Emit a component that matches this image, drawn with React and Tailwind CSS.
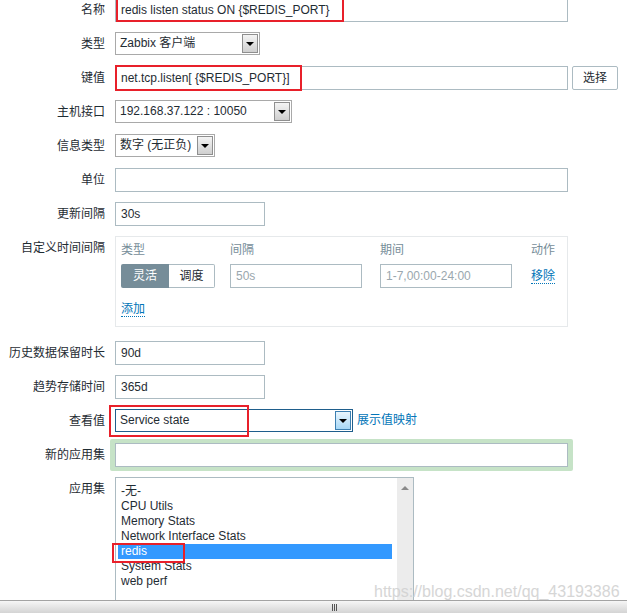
import React from "react";

const Arrow = () => (
  <span className="h-0 w-0 border-x-[4px] border-t-[4px] border-x-transparent border-t-black" />
);

const Select = ({ className, value, focused }) => {
  return (
    <div
      className={`flex h-[23px] items-stretch bg-white ${
        focused ? "border border-[#1f5e8c]" : "border border-[#a9a9a9]"
      } ${className}`}
    >
      <div className="flex-1 truncate pl-[4px] leading-[21px]">{value}</div>
      <div
        className={`m-px flex w-[16px] items-center justify-center border ${
          focused
            ? "border-[#3c7fb1] bg-linear-to-b from-[#eaf6fd] to-[#a7d8f7]"
            : "border-[#8f8f8f] bg-linear-to-b from-[#f4f4f4] to-[#cfcfcf]"
        }`}
      >
        <Arrow />
      </div>
    </div>
  );
};

const Input = ({ className, value, placeholder }) => (
  <div
    className={`h-6 border border-[#acbbc2] bg-white px-[5px] leading-[22px] ${className}`}
  >
    {value ? value : <span className="text-[#9aa7ae]">{placeholder}</span>}
  </div>
);

const Row = ({ label, className, children }) => (
  <div className={`flex items-start ${className}`}>
    <div className="h-6 w-[105px] shrink-0 text-right leading-6">{label}</div>
    <div className="relative ml-[10px] flex items-start">{children}</div>
  </div>
);

const RedBox = ({ className }) => (
  <div className={`pointer-events-none absolute border-2 border-[#e8202a] ${className}`} />
);

const apps = [
  "-无-",
  "CPU Utils",
  "Memory Stats",
  "Network Interface Stats",
  "redis",
  "System Stats",
  "web perf",
];

export default function App() {
  return (
    <div className="flex h-[613px] w-[627px] flex-col overflow-hidden bg-white text-[12px] text-[#1f2c33] [font-family:'Liberation_Sans','Noto_Sans_CJK_SC',sans-serif]">
      <div className="relative flex-1 overflow-hidden">
        <div className="-mt-[2px] flex flex-col">
          <Row label="名称" className="h-[34px]">
            <Input className="w-[453px]" value="redis listen status ON {$REDIS_PORT}" />
            <RedBox className="-top-[1px] left-px h-[25px] w-[228px]" />
          </Row>

          <Row label="类型" className="h-[34px]">
            <Select className="w-[145px]" value="Zabbix 客户端" />
          </Row>

          <Row label="键值" className="h-[34px]">
            <Input className="w-[453px]" value="net.tcp.listen[ {$REDIS_PORT}]" />
            <RedBox className="-top-[1px] left-0 h-[26px] w-[187px]" />
            <button className="ml-[4px] h-6 w-[46px] rounded-[2px] border border-[#acbbc2] bg-white text-[12px] text-[#1f2c33]">
              选择
            </button>
          </Row>

          <Row label="主机接口" className="h-[34px]">
            <Select className="w-[177px]" value="192.168.37.122 : 10050" />
          </Row>

          <Row label="信息类型" className="h-[34px]">
            <Select className="w-[100px]" value="数字 (无正负)" />
          </Row>

          <Row label="单位" className="h-[34px]">
            <Input className="w-[453px]" value="" />
          </Row>

          <Row label="更新间隔" className="h-[34px]">
            <Input className="w-[150px]" value="30s" />
          </Row>

          <Row label="自定义时间间隔" className="mb-[14px]">
            <div className="h-[91px] w-[453px] border border-[#e6e9eb] px-[5px] pt-[4px]">
              <div className="flex h-[19px] leading-[19px] text-[#768d99]">
                <div className="w-[94px]">类型</div>
                <div className="ml-[15px] w-[132px]">间隔</div>
                <div className="ml-[18px] w-[132px]">期间</div>
                <div className="ml-[19px]">动作</div>
              </div>
              <div className="mt-[4px] flex h-6 items-center">
                <div className="flex w-[94px]">
                  <div className="flex h-6 w-[48px] items-center justify-center rounded-l-[2px] bg-[#768d99] text-white">
                    灵活
                  </div>
                  <div className="flex h-6 w-[46px] items-center justify-center rounded-r-[2px] border border-l-0 border-[#acbbc2]">
                    调度
                  </div>
                </div>
                <Input className="ml-[15px] w-[132px]" placeholder="50s" />
                <Input className="ml-[18px] w-[132px]" placeholder="1-7,00:00-24:00" />
                <span className="ml-[19px] inline-block border-b border-dotted border-[#0275b8] leading-[14px] text-[#0275b8]">
                  移除
                </span>
              </div>
              <div className="mt-[12px]">
                <span className="inline-block border-b border-dotted border-[#0275b8] leading-[14px] text-[#0275b8]">
                  添加
                </span>
              </div>
            </div>
          </Row>

          <Row label="历史数据保留时长" className="h-[34px]">
            <Input className="w-[150px]" value="90d" />
          </Row>

          <Row label="趋势存储时间" className="h-[34px]">
            <Input className="w-[150px]" value="365d" />
          </Row>

          <Row label="查看值" className="h-[30px]">
            <Select className="w-[238px]" value="Service state" focused />
            <RedBox className="-left-[6px] -top-[4px] h-[32px] w-[140px]" />
            <span className="ml-[4px] leading-[23px] text-[#0275b8]">展示值映射</span>
          </Row>

          <div className="mb-[6px] flex h-[32px] items-center">
            <div className="w-[105px] shrink-0 text-right">新的应用集</div>
            <div className="ml-[5px] rounded-[2px] bg-[#c6e3c7] px-[5px] py-[4px]">
              <div className="h-6 w-[453px] border border-[#acbbc2] bg-white" />
            </div>
          </div>

          <Row label="应用集">
            <div className="flex h-[140px] w-[299px] border border-[#acbbc2] bg-white">
              <div className="flex-1 pl-[2px] pr-[5px] pt-[6px]">
                {apps.map((a) => (
                  <div
                    key={a}
                    className={`h-[15px] px-[3px] leading-[15px] ${
                      a === "redis" ? "bg-[#3399ff] text-white" : "text-[#1f2c33]"
                    }`}
                  >
                    {a}
                  </div>
                ))}
              </div>
              <div className="flex w-[16px] justify-center bg-[#ececec] pt-[8px]">
                <span className="h-0 w-0 border-x-[4px] border-b-[4px] border-x-transparent border-b-[#8a8a8a]" />
              </div>
            </div>
            <RedBox className="-left-[3px] top-[66px] h-[20px] w-[73px]" />
          </Row>
        </div>

        {/* csdn watermark */}
        <div className="pointer-events-none absolute left-[374px] top-[583px] text-[16px] leading-[18px] text-[#d2d2d2] opacity-90">
          https://blog.csdn.net/qq_43193386
        </div>
      </div>

      <div className="flex h-[13px] items-center border-t border-[#a3a3a3] bg-linear-to-b from-[#f6f6f6] to-[#d4d4d4] pl-[332px]">
        <div className="flex h-[7px] gap-px">
          <span className="w-px bg-[#555]" />
          <span className="w-px bg-[#555]" />
          <span className="w-px bg-[#555]" />
        </div>
      </div>
    </div>
  );
}
